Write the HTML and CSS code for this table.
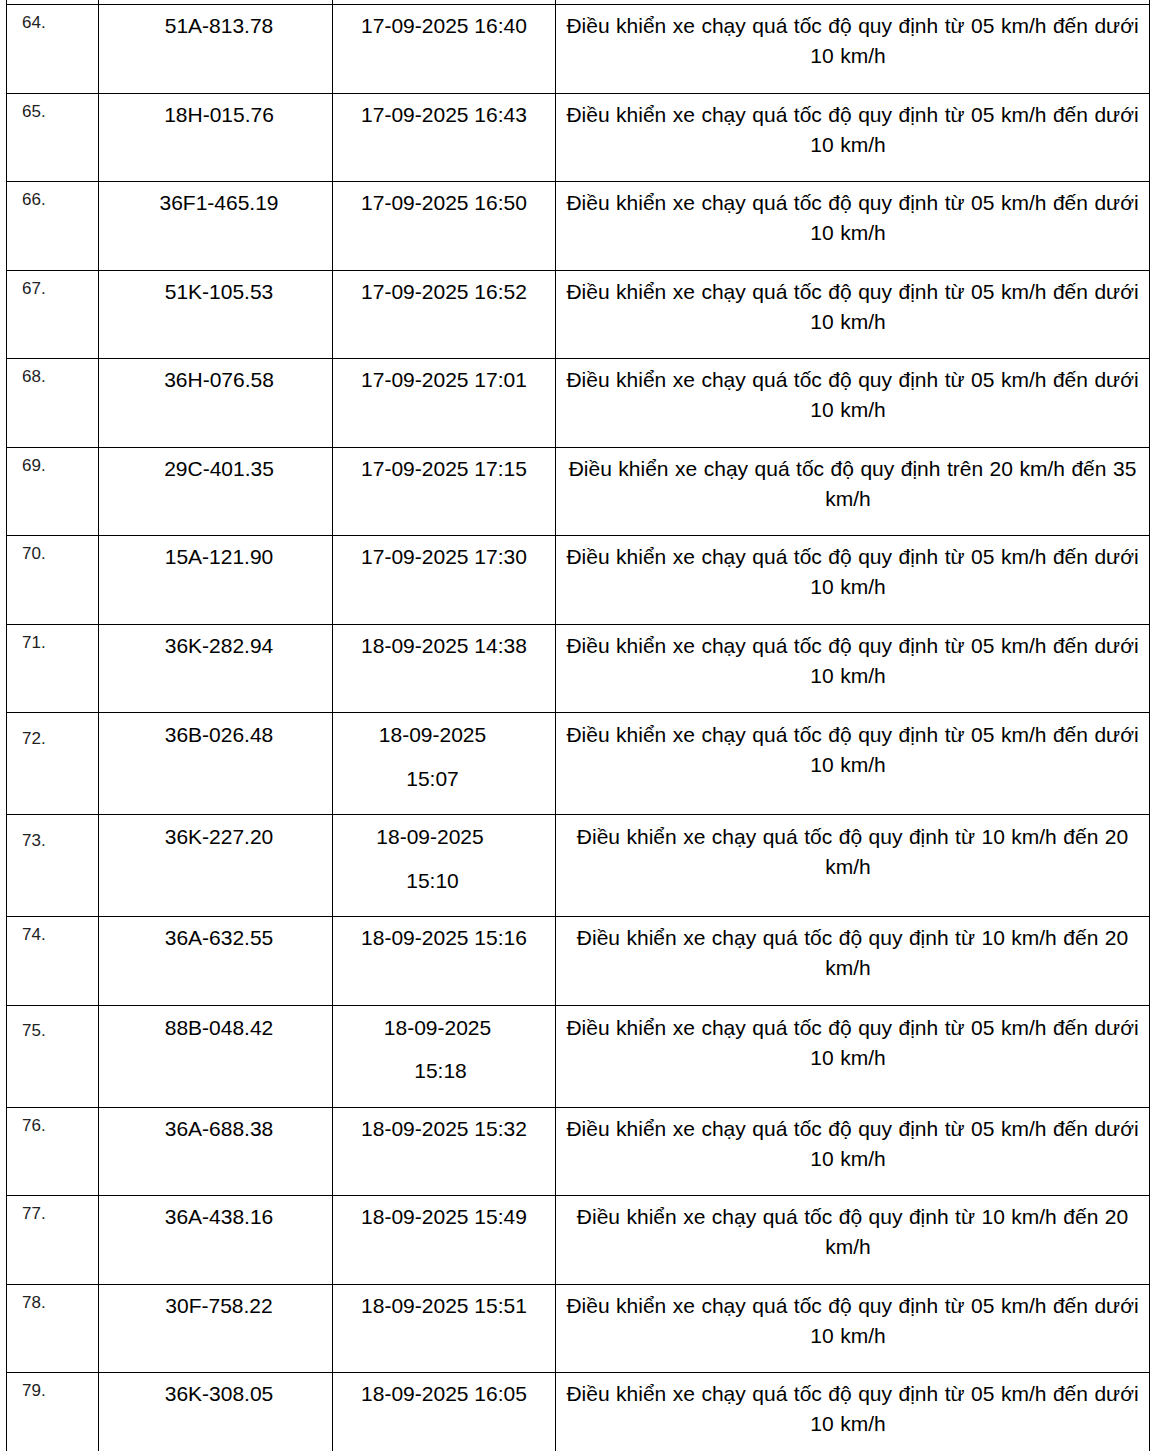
FILE: index.html
```html
<!DOCTYPE html>
<html lang="vi">
<head>
<meta charset="utf-8">
<title>Danh sách vi phạm</title>
<link rel="stylesheet" href="styles.css">
</head>
<body>
<div class="sheet">
<table class="grid">
<colgroup><col class="c-no"><col class="c-plate"><col class="c-time"><col class="c-desc"></colgroup>
<tbody>
<tr class="stub"><td></td><td></td><td></td><td></td></tr>
<tr><td class="no">64.</td><td class="plate">51A-813.78</td><td>17-09-2025 16:40</td><td class="desc">Điều khiển xe chạy quá tốc độ quy định từ 05 km/h đến dưới 10 km/h<span class="tail"></span></td></tr>
<tr><td class="no">65.</td><td class="plate">18H-015.76</td><td>17-09-2025 16:43</td><td class="desc">Điều khiển xe chạy quá tốc độ quy định từ 05 km/h đến dưới 10 km/h<span class="tail"></span></td></tr>
<tr><td class="no">66.</td><td class="plate">36F1-465.19</td><td>17-09-2025 16:50</td><td class="desc">Điều khiển xe chạy quá tốc độ quy định từ 05 km/h đến dưới 10 km/h<span class="tail"></span></td></tr>
<tr><td class="no">67.</td><td class="plate">51K-105.53</td><td>17-09-2025 16:52</td><td class="desc">Điều khiển xe chạy quá tốc độ quy định từ 05 km/h đến dưới 10 km/h<span class="tail"></span></td></tr>
<tr><td class="no">68.</td><td class="plate">36H-076.58</td><td>17-09-2025 17:01</td><td class="desc">Điều khiển xe chạy quá tốc độ quy định từ 05 km/h đến dưới 10 km/h<span class="tail"></span></td></tr>
<tr><td class="no">69.</td><td class="plate">29C-401.35</td><td>17-09-2025 17:15</td><td class="desc">Điều khiển xe chạy quá tốc độ quy định trên 20 km/h đến 35 km/h<span class="tail"></span></td></tr>
<tr><td class="no">70.</td><td class="plate">15A-121.90</td><td>17-09-2025 17:30</td><td class="desc">Điều khiển xe chạy quá tốc độ quy định từ 05 km/h đến dưới 10 km/h<span class="tail"></span></td></tr>
<tr><td class="no">71.</td><td class="plate">36K-282.94</td><td>18-09-2025 14:38</td><td class="desc">Điều khiển xe chạy quá tốc độ quy định từ 05 km/h đến dưới 10 km/h<span class="tail"></span></td></tr>
<tr class="tall"><td class="no">72.</td><td class="plate">36B-026.48</td><td class="split"><p class="ln mr-23">18-09-2025</p><p class="ln mr-23">15:07</p></td><td class="desc">Điều khiển xe chạy quá tốc độ quy định từ 05 km/h đến dưới 10 km/h<span class="tail"></span></td></tr>
<tr class="tall"><td class="no">73.</td><td class="plate">36K-227.20</td><td class="split"><p class="ln mr-28">18-09-2025</p><p class="ln mr-23">15:10</p></td><td class="desc">Điều khiển xe chạy quá tốc độ quy định từ 10 km/h đến 20 km/h<span class="tail"></span></td></tr>
<tr><td class="no">74.</td><td class="plate">36A-632.55</td><td>18-09-2025 15:16</td><td class="desc">Điều khiển xe chạy quá tốc độ quy định từ 10 km/h đến 20 km/h<span class="tail"></span></td></tr>
<tr class="tall"><td class="no">75.</td><td class="plate">88B-048.42</td><td class="split"><p class="ln mr-13">18-09-2025</p><p class="ln mr-7">15:18</p></td><td class="desc">Điều khiển xe chạy quá tốc độ quy định từ 05 km/h đến dưới 10 km/h<span class="tail"></span></td></tr>
<tr><td class="no">76.</td><td class="plate">36A-688.38</td><td>18-09-2025 15:32</td><td class="desc">Điều khiển xe chạy quá tốc độ quy định từ 05 km/h đến dưới 10 km/h<span class="tail"></span></td></tr>
<tr><td class="no">77.</td><td class="plate">36A-438.16</td><td>18-09-2025 15:49</td><td class="desc">Điều khiển xe chạy quá tốc độ quy định từ 10 km/h đến 20 km/h<span class="tail"></span></td></tr>
<tr><td class="no">78.</td><td class="plate">30F-758.22</td><td>18-09-2025 15:51</td><td class="desc">Điều khiển xe chạy quá tốc độ quy định từ 05 km/h đến dưới 10 km/h<span class="tail"></span></td></tr>
<tr><td class="no">79.</td><td class="plate">36K-308.05</td><td>18-09-2025 16:05</td><td class="desc">Điều khiển xe chạy quá tốc độ quy định từ 05 km/h đến dưới 10 km/h<span class="tail"></span></td></tr>
</tbody>
</table>
</div>
</body>
</html>
```
FILE: styles.css
```css
html, body {
  margin: 0;
  padding: 0;
  background: #fff;
}
body {
  font-family: "Liberation Sans", Arial, sans-serif;
  color: #000;
}
.sheet {
  padding-left: 6px;
}
.grid {
  border-collapse: collapse;
  table-layout: fixed;
  width: 1143px;
}
.c-no { width: 92px; }
.c-plate { width: 234px; }
.c-time { width: 223px; }
.c-desc { width: 594px; }

.grid td {
  border: 1px solid #000;
  vertical-align: top;
  text-align: center;
  font-size: 21px;
  line-height: 30px;
  padding: 6px 6px 21.5px;
}
.grid .stub td {
  border-top: none;
  height: 4px;
  padding: 0;
  line-height: 0;
}
.grid td.no {
  text-align: left;
  font-size: 17px;
  line-height: 20px;
  color: #222;
  padding-top: 8px;
  padding-left: 15px;
}
.grid td.plate {
  padding-left: 13px;
}
.grid td.desc {
  padding-left: 4px;
  padding-right: 4px;
  word-spacing: 0.65px;
}
.tail {
  display: inline-block;
  width: 9px;
}
.grid .tall td {
  padding-top: 7px;
}
.grid .tall td.no {
  padding-top: 15.5px;
}
.grid .tall td.split {
  padding-bottom: 20.5px;
}
.ln {
  margin: 0;
}
.ln + .ln {
  margin-top: 13.5px;
}
.mr-23 { margin-right: 23px; }
.mr-28 { margin-right: 28px; }
.mr-13 { margin-right: 13px; }
.mr-7 { margin-right: 7px; }
```
